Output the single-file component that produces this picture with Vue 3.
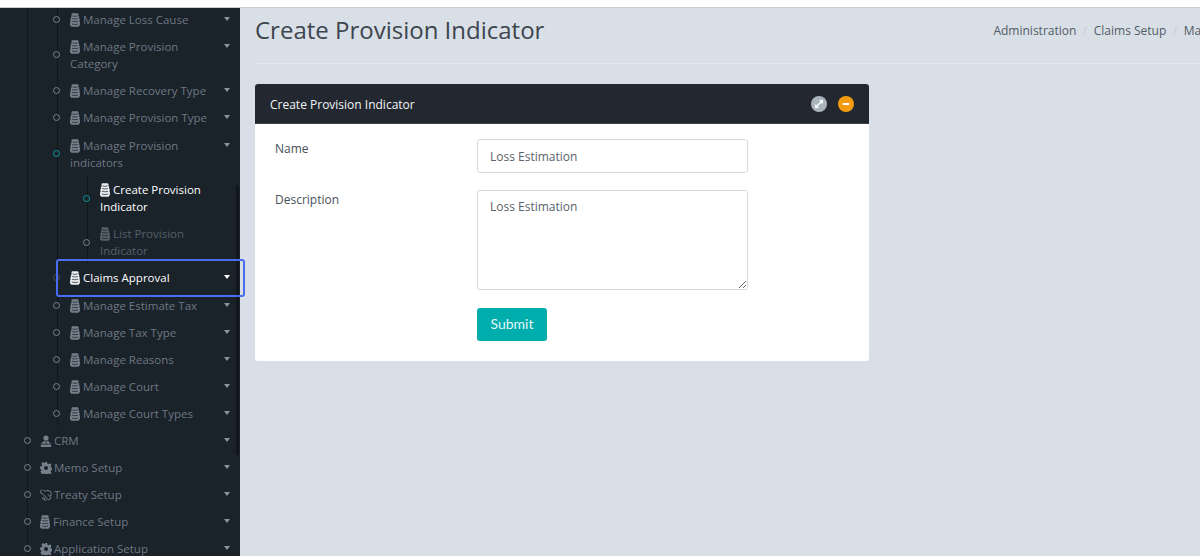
<script setup>
const beforeRows = [
  { label: 'Manage Loss Cause' },
  { label: 'Manage Provision Category' },
  { label: 'Manage Recovery Type' },
  { label: 'Manage Provision Type' },
]
const afterRows = [
  { label: 'Manage Estimate Tax' },
  { label: 'Manage Tax Type' },
  { label: 'Manage Reasons' },
  { label: 'Manage Court' },
  { label: 'Manage Court Types' },
]
const topRows = [
  { label: 'CRM', icon: 'user' },
  { label: 'Memo Setup', icon: 'gear' },
  { label: 'Treaty Setup', icon: 'shake' },
  { label: 'Finance Setup', icon: 'stack' },
  { label: 'Application Setup', icon: 'gear' },
]
const crumbs = ['Administration', 'Claims Setup', 'Manage Provision Indicators', 'Create Provision Indicator']
</script>

<template>
  <div class="page">
    <div class="topbar"></div>
    <div class="shell">
      <aside class="sidebar">
        <svg width="0" height="0" class="defs" aria-hidden="true">
          <symbol id="i-stack" viewBox="0 0 10 14">
            <path d="M1.900 .3h6l.8 1.200-.4 1.400 1 .8-.3 1.500.9 1.200-.5 1.500.5 1.100.1 2.800L8.600 13.700H1.400L-.1 12.100l.2-2.700.6-1.200-.5-1.500.9-1.100-.3-1.600 1-.8-.4-1.500z" fill="currentColor"/>
            <path d="M2.500 2.900q2.500 1 5 0M2.200 5.500q2.800 1.100 5.600 0M2 8.200q3 1.200 6 0M1.800 11q3.200 1.200 6.400 0" stroke="#1a222a" stroke-width=".7" fill="none"/>
          </symbol>
          <symbol id="i-user" viewBox="0 0 14 14">
            <circle cx="7" cy="3.600" r="3" fill="currentColor"/>
            <path d="M3.600 7.200h6.800l1 2.400H13V14H1V9.600h1.600z" fill="currentColor"/>
            <path d="M1 10.800h12M7 7.400v3" stroke="#1a222a" stroke-width=".9"/>
          </symbol>
          <symbol id="i-gear" viewBox="0 0 14 14">
            <path fill-rule="evenodd" fill="currentColor" d="M5.700 0h2.600l.4 2 1.200.6 1.800-1 1.800 1.900-1.100 1.700.5 1.200 2.100.4v2.500l-2.100.5-.5 1.200 1.100 1.700-1.800 1.800-1.800-1.100-1.200.5-.4 2H5.700l-.4-2-1.200-.5-1.800 1.100L.5 11.200l1.100-1.700-.5-1.200L-.1 7.800V5.300l2.200-.4.5-1.200L1.500 2l1.800-1.900 1.800 1 1.200-.6zM7 4.600a2.400 2.400 0 1 0 0 4.800 2.400 2.400 0 0 0 0-4.800z"/>
          </symbol>
          <symbol id="i-shake" viewBox="0 0 14 14">
            <path d="M1.200 1.200 1 5l3 1.500L8 11l2.300 1.800L13 10.500 9.500 6.500M3.500 .8 6 3l2-1.500 4.500 1.300L13.200 7 11.500 8M4 9.500 2.500 11l1.500 1.200L5.500 10.800M6 11.500l-1 1 1.500 1.200 1.200-1" stroke="currentColor" stroke-width="1.150" fill="none" stroke-linecap="round" stroke-linejoin="round"/>
          </symbol>
        </svg>

        <ul class="tree level-1">
          <li>
            <ul class="tree level-2">
              <li v-for="r in beforeRows" :key="r.label" class="row">
                <span class="dot"></span>
                <svg class="ico"><use href="#i-stack" /></svg>
                <span class="txt">{{ r.label }}</span>
                <span class="caret"></span>
              </li>
              <li class="row open">
                <span class="dot teal"></span>
                <svg class="ico"><use href="#i-stack" /></svg>
                <span class="txt">Manage Provision indicators</span>
                <span class="caret"></span>
              </li>
              <li>
                <ul class="tree level-3">
                  <li class="row current">
                    <span class="dot teal"></span>
                    <svg class="ico"><use href="#i-stack" /></svg>
                    <span class="txt">Create Provision Indicator</span>
                  </li>
                  <li class="row dim">
                    <span class="dot"></span>
                    <svg class="ico"><use href="#i-stack" /></svg>
                    <span class="txt">List Provision Indicator</span>
                  </li>
                </ul>
              </li>
              <li class="row current focused">
                <span class="dot dim-dot"></span>
                <svg class="ico"><use href="#i-stack" /></svg>
                <span class="txt">Claims Approval</span>
                <span class="caret"></span>
              </li>
              <li v-for="r in afterRows" :key="r.label" class="row">
                <span class="dot"></span>
                <svg class="ico"><use href="#i-stack" /></svg>
                <span class="txt">{{ r.label }}</span>
                <span class="caret"></span>
              </li>
            </ul>
          </li>
          <li v-for="r in topRows" :key="r.label" class="row">
            <span class="dot"></span>
            <svg class="ico" :class="{ wide: r.icon !== 'stack' }"><use :href="'#i-' + r.icon" /></svg>
            <span class="txt">{{ r.label }}</span>
            <span class="caret"></span>
          </li>
        </ul>
        <div class="scrollbar"></div>
      </aside>

      <main class="main">
        <header class="head">
          <h1>Create Provision Indicator</h1>
          <nav class="crumbs">
            <template v-for="(c, i) in crumbs" :key="c">
              <span v-if="i" class="sep">/</span>
              <span>{{ c }}</span>
            </template>
          </nav>
        </header>

        <section class="card">
          <div class="card-head">
            <h2>Create Provision Indicator</h2>
            <span class="round grey">
              <svg viewBox="0 0 16 16" width="16" height="16"><path d="M5 11 11 5M8.500 4.700h2.800v2.800M4.700 8.500v2.800h2.800" stroke="#fff" stroke-width="1.300" fill="none"/></svg>
            </span>
            <span class="round orange">
              <svg viewBox="0 0 16 16" width="16" height="16"><path d="M4.800 8h6.400" stroke="#fff" stroke-width="2"/></svg>
            </span>
          </div>
          <form class="form" @submit.prevent>
            <label for="name">Name</label>
            <input id="name" class="field" value="Loss Estimation" />
            <label for="desc">Description</label>
            <textarea id="desc" class="field area">Loss Estimation</textarea>
            <button class="submit" type="submit">Submit</button>
          </form>
        </section>
      </main>
    </div>
  </div>
</template>

<style>
html, body { margin: 0; background: #d9dfe7; }
</style>

<style scoped>
.page {
  height: 556px;
  overflow: hidden;
  display: flex;
  flex-direction: column;
  font-family: "Open Sans", "Noto Sans", sans-serif;
  font-size: 12px;
}
.topbar {
  position: relative;
  z-index: 3;
  flex: 0 0 8px;
  box-sizing: border-box;
  background: #fff;
  border-bottom: 1px solid #c9ced3;
}
.shell { flex: 1; display: flex; min-height: 0; }
.sidebar {
  position: relative;
  flex: 0 0 240px;
  background: #1a222a;
  color: #6e7882;
  font-size: 11.500px;
}
.defs { position: absolute; }
.tree { list-style: none; margin: 0; padding: 0; position: relative; }
.level-1 { margin-top: -2.500px; }
.level-3 { margin-top: .5px; }
.level-1::before, .level-2::before, .level-3::before {
  content: "";
  position: absolute;
  top: 0;
  width: 1px;
  background: #10161b;
}
.level-1::before { left: 27px; bottom: 0; }
.level-2::before { left: 56.500px; bottom: 1px; }
.level-3::before { left: 86.500px; bottom: 1px; }

.row {
  position: relative;
  box-sizing: border-box;
  padding: 5px 24px 5px 40px;
  line-height: 17px;
}
.level-2 > .row { padding-left: 70px; }
.level-3 > .row { padding-left: 100px; }
.open { margin-top: 1px; }
.focused { margin-bottom: 1px; }
.ico { width: 10px; height: 14px; vertical-align: -3px; margin-right: 3px; color: #76808a; }
.ico.wide { width: 12px; height: 12px; vertical-align: -2px; margin-right: 2px; }
.dot {
  position: absolute;
  left: 23.500px;
  top: 50%;
  width: 7px;
  height: 7px;
  margin-top: -3.500px;
  box-sizing: border-box;
  border: 1.500px solid #7a848d;
  border-radius: 50%;
  background: #1a222a;
}
.level-2 > .row > .dot { left: 53px; }
.level-3 > .row > .dot { left: 83px; }
.dot.teal { border-color: #0e9a9a; }
.dot.dim-dot { border-color: #4a5560; }
.caret {
  position: absolute;
  right: 10px;
  top: 11px;
  width: 0;
  height: 0;
  border: 3.500px solid transparent;
  border-top: 4px solid #8b949c;
  border-bottom: 0;
}
.current { color: #fff; }
.current .ico { color: #e8ecef; }
.current .caret { border-top-color: #fff; }
.dim { color: #566069; }
.dim .ico { color: #566069; }
.focused::after {
  content: "";
  position: absolute;
  left: 56px;
  right: -5px;
  top: -5px;
  bottom: -6px;
  border: 2px solid #4a6cf0;
  border-radius: 3px;
  z-index: 2;
  pointer-events: none;
}
.scrollbar {
  position: absolute;
  right: 1px;
  top: 177px;
  height: 270px;
  width: 3px;
  border-radius: 2px;
  background: #11171c;
}

.main { flex: 1; min-width: 0; padding: 0 15px; overflow: hidden; }
.head {
  display: flex;
  align-items: center;
  justify-content: space-between;
  height: 56px;
  box-sizing: border-box;
  border-bottom: 1px solid #e5e9ee;
  margin-right: -15px;
  padding-bottom: 11px;
}
h1 {
  margin: 0;
  font-size: 24px;
  font-weight: 400;
  color: #3d454e;
  white-space: nowrap;
  line-height: 42px;
}
.crumbs {
  flex: none;
  margin-left: 449px;
  white-space: nowrap;
  color: #535c66;
  font-size: 12px;
}
.sep { color: #c5ccd3; margin: 0 6.500px; }

.card {
  width: 614px;
  margin-top: 20px;
  background: #fff;
  border-radius: 3px;
  overflow: hidden;
}
.card-head {
  display: flex;
  align-items: center;
  height: 40px;
  box-sizing: border-box;
  padding: 1px 15px 0;
  background: #232830;
  border-bottom: 1px solid #3a4047;
}
h2 {
  margin: 0 auto 0 0;
  font-size: 12px;
  font-weight: 500;
  color: #f2f4f6;
}
.round { width: 16px; height: 16px; border-radius: 50%; margin-left: 11px; display: block; }
.round svg { display: block; }
.grey { background: #aab4bc; }
.orange { background: #f39c12; }

.form {
  display: grid;
  grid-template-columns: 202px 271px;
  row-gap: 17px;
  padding: 15px 0 20px 20px;
  color: #48505a;
}
.form label { line-height: 18px; padding-top: 1px; }
.field {
  box-sizing: border-box;
  width: 271px;
  height: 34px;
  padding: 0 12px;
  border: 1px solid #d5d8dc;
  border-radius: 3px;
  background: #fff;
  font: 12px "Open Sans", "Noto Sans", sans-serif;
  color: #5a626b;
  outline: none;
}
.area { height: 100px; padding-top: 8px; padding-bottom: 0; display: block; resize: both; line-height: 16px; }
.submit {
  grid-column: 2;
  width: 70px;
  height: 33px;
  padding: 0 0 2px;
  margin-top: 1px;
  border: 0;
  border-radius: 3px;
  background: #00adad;
  color: #e6f7f7;
  font: 14px Lato, "Open Sans", sans-serif;
}
</style>
